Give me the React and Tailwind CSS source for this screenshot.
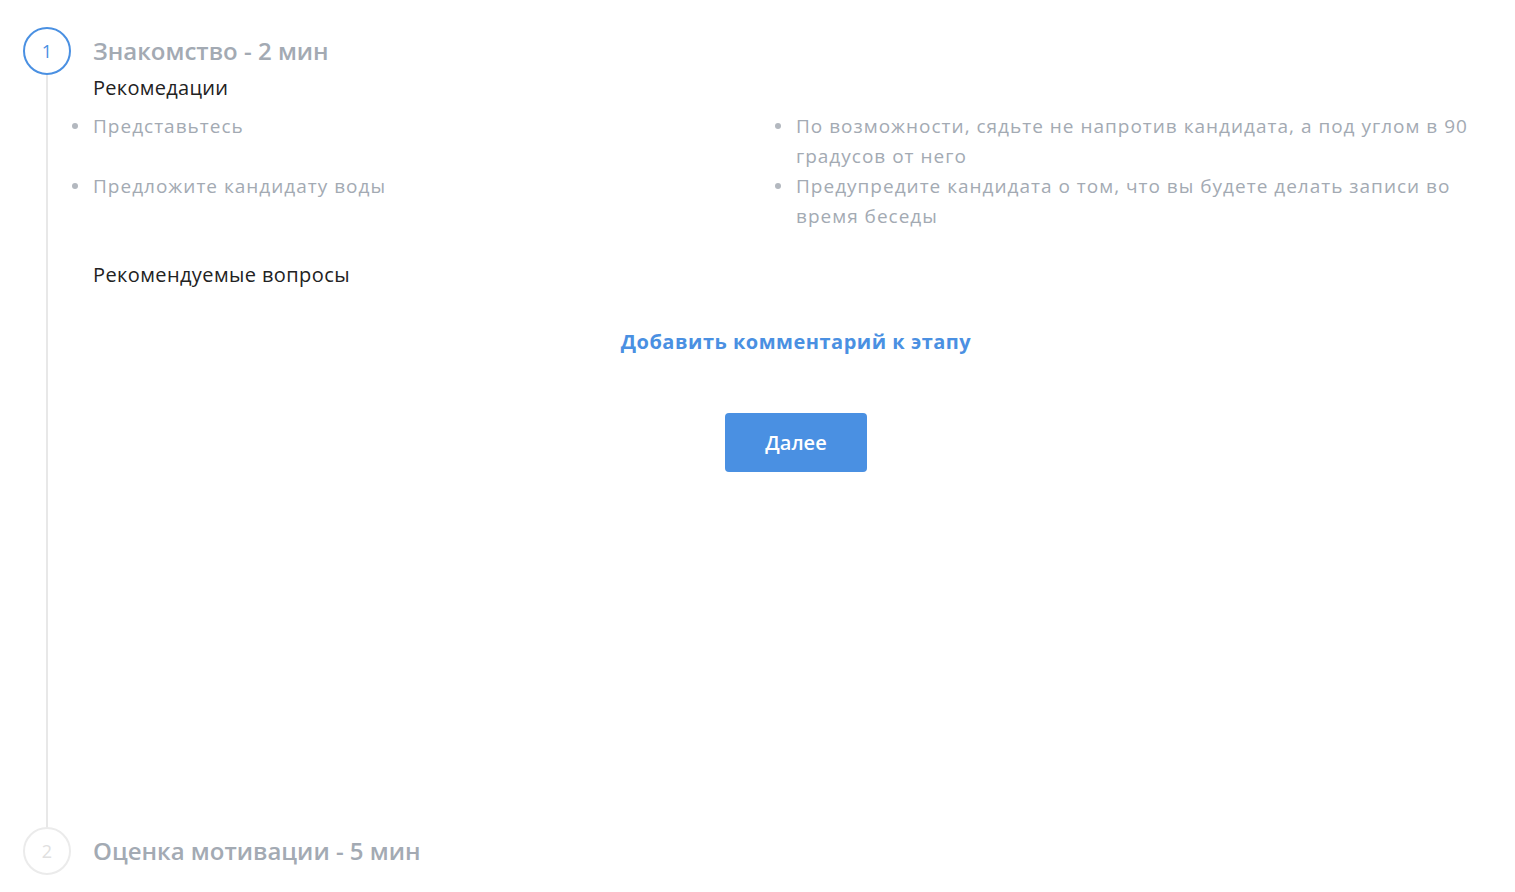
export default function App() {
  const tips = [
    'Представьтесь',
    'По возможности, сядьте не напротив кандидата, а под углом в 90 градусов от него',
    'Предложите кандидату воды',
    'Предупредите кандидата о том, что вы будете делать записи во время беседы',
  ]

  return (
    <div className="min-h-screen bg-white pl-[23px] pr-4 pt-[27px]" style={{ fontFamily: '"Open Sans", "Liberation Sans", sans-serif' }}>
      {/* step 1 */}
      <div className="flex h-[800px]">
        <div className="flex w-12 shrink-0 flex-col items-center">
          <div className="flex h-12 w-12 items-center justify-center rounded-full border-2 border-[#4a90e2] text-[18px] font-medium text-[#4a90e2]">1</div>
          <div className="w-[2px] flex-1 bg-[#e8e8e8]"></div>
        </div>
        <div className="ml-[22px] flex-1">
          <div className="text-[24px] font-semibold leading-[48px] text-[#a3aab3]">Знакомство - 2 мин</div>
          <div className="text-[20px] font-medium leading-[26px] tracking-[0.3px] text-[#222]">Рекомедации</div>
          <ul className="mt-[10px] grid grid-cols-2 text-[19px] leading-[30px] tracking-[1px] text-[#a3aab3]">
            {tips.map((t) => (
              <li key={t} className="relative pr-6">
                <span className="absolute left-[-21px] top-[12px] h-[6px] w-[6px] rounded-full bg-[#b3b8bf]"></span>
                {t}
              </li>
            ))}
          </ul>
          <div className="mt-[31px] text-[20px] font-medium leading-[26px] tracking-[0.4px] text-[#222]">Рекомендуемые вопросы</div>
          <div className="mt-[40px] text-center text-[20px] font-bold leading-[28px] tracking-[0.5px] text-[#4a90e2]">Добавить комментарий к этапу</div>
          <div className="mt-[57px] flex justify-center">
            <button className="h-[59px] w-[142px] rounded-[4px] bg-[#4a90e2] text-[20px] font-semibold text-white">Далее</button>
          </div>
        </div>
      </div>
      {/* step 2 */}
      <div className="flex">
        <div className="flex h-12 w-12 shrink-0 items-center justify-center rounded-full border-2 border-[#ebebeb] text-[18px] text-[#e0e0e0]">2</div>
        <div className="ml-[22px] text-[24px] font-semibold leading-[48px] text-[#a3aab3]">Оценка мотивации - 5 мин</div>
      </div>
    </div>
  )
}
